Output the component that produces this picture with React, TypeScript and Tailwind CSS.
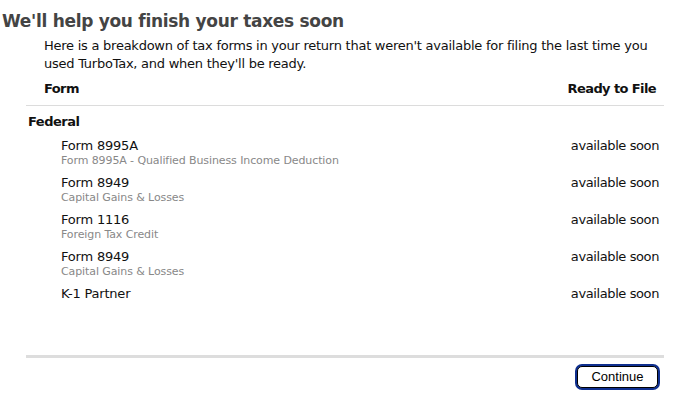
const rows = [
  { name: 'Form 8995A', desc: 'Form 8995A - Qualified Business Income Deduction' },
  { name: 'Form 8949', desc: 'Capital Gains & Losses' },
  { name: 'Form 1116', desc: 'Foreign Tax Credit' },
  { name: 'Form 8949', desc: 'Capital Gains & Losses' },
  { name: 'K-1 Partner', desc: '' },
];

export default function App() {
  return (
    <div className="w-[681px] h-[409px] bg-white text-[#111] font-['DejaVu_Sans',sans-serif] overflow-hidden">
      <h1 className="pl-[2px] pt-[9px] text-[17px] leading-[24px] font-bold text-[#444] tracking-[-0.3px]">
        We'll help you finish your taxes soon
      </h1>

      <div className="pl-[26px] pr-[17px]">
        <p className="pl-[18px] pt-[4px] text-[13px] leading-[18px] tracking-[-0.25px]">
          Here is a breakdown of tax forms in your return that weren't available for filing the last time you used
          TurboTax, and when they'll be ready.
        </p>

        <div className="flex justify-between pl-[18px] pr-[8px] pt-[8px] pb-[8px] border-b border-[#dcdcdc] text-[13px] leading-[16px] font-bold tracking-[-0.6px]">
          <span>Form</span>
          <span>Ready to File</span>
        </div>

        <div className="h-[249px]">
          <div className="pl-[2px] pt-[8px] text-[13px] leading-[16px] font-bold tracking-[-0.5px]">Federal</div>
          <div className="pt-[8px]">
            {rows.map((r, i) => (
              <div key={i} className="flex justify-between h-[37px] pl-[35px] pr-[5px]">
                <div className="flex flex-col">
                  <span className="text-[13px] leading-[16px] tracking-[-0.2px]">{r.name}</span>
                  {r.desc && <span className="text-[11px] leading-[14px] text-[#888] tracking-[-0.1px]">{r.desc}</span>}
                </div>
                <span className="text-[13px] leading-[16px] tracking-[-0.4px]">available soon</span>
              </div>
            ))}
          </div>
        </div>

        <div className="h-[3px] bg-[#dddddd]" />

        <div className="flex justify-end pt-[6px] pr-[4px]">
          <button className="w-[85px] h-[26px] rounded-[7px] bg-[#0f2f8f] p-[2px]">
            <span className="flex items-center justify-center w-full h-full rounded-[5px] border-[1.5px] border-black bg-white text-[13px] font-['Liberation_Sans',sans-serif] text-black">
              Continue
            </span>
          </button>
        </div>
      </div>
    </div>
  );
}
